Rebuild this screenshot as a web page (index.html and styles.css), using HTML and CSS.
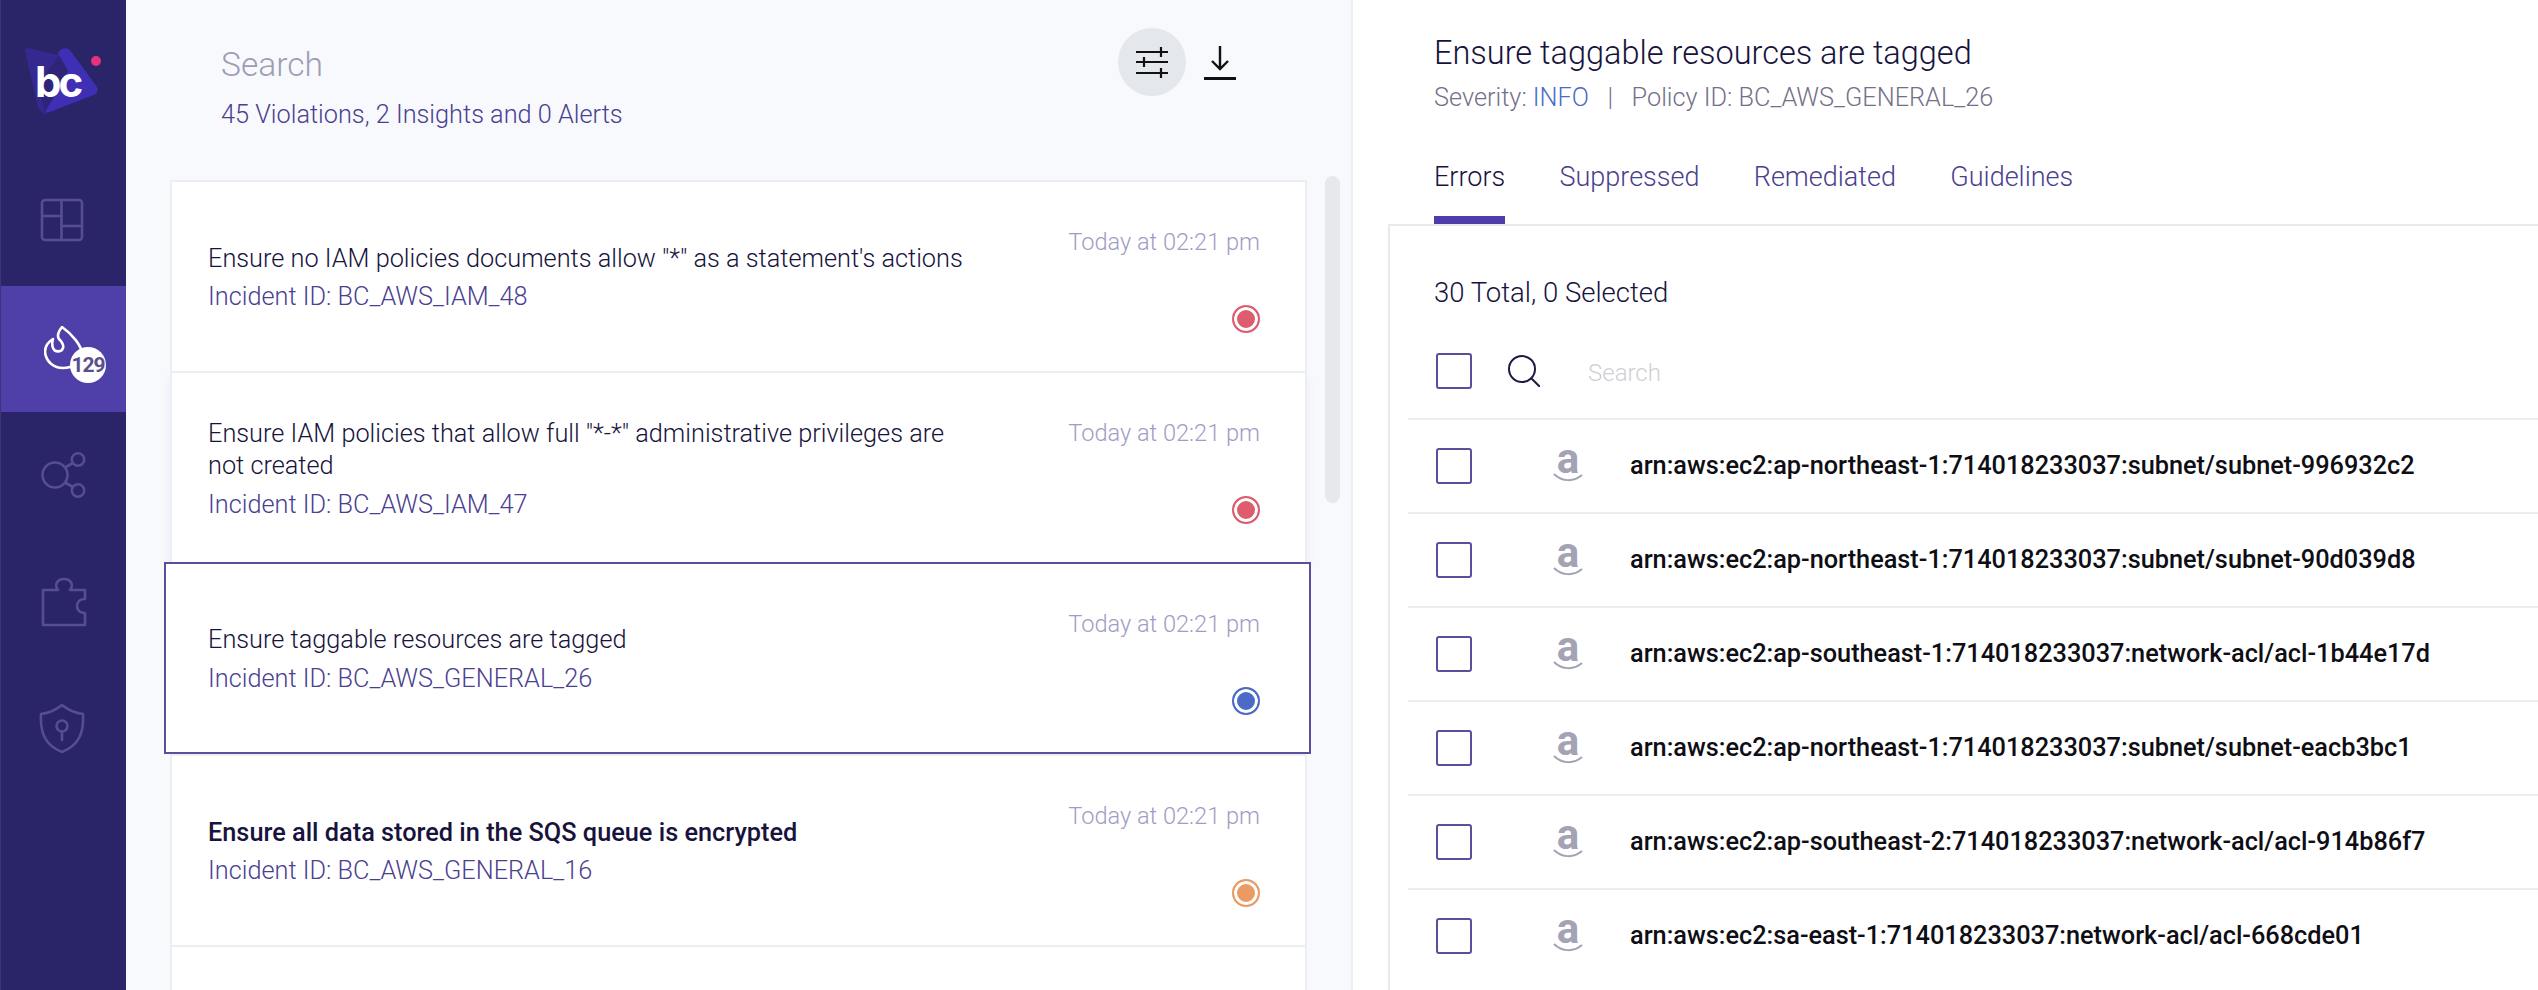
FILE: index.html
```html
<!DOCTYPE html>
<html lang="en">
<head>
<meta charset="utf-8">
<title>Incidents</title>
<link rel="stylesheet" href="styles.css">
</head>
<body>
<div class="app">
  <nav class="sidebar">
    <div class="logo">
      <svg class="logo-art" viewBox="0 0 80 70" width="80" height="70" stroke-linejoin="round">
        <path d="M4 4 L33 11 L21 64 L17 60 Z" fill="#35298f" stroke="#35298f" stroke-width="6"/>
        <path d="M37 6 C39 3 43 3 45 6 L70 40 C72 43 71 45 68 46 L24 63 L31 30 Z" fill="#3f2fb5" stroke="#3f2fb5" stroke-width="5"/>
        <path d="M35 8 L44 24 L30 50 L21 65 L14 38 Z" fill="#2e2578"/>
        <circle cx="72" cy="14" r="5" fill="#e6317f"/>
      </svg>
      <span class="logo-text">bc</span>
    </div>
    <div class="nav-item nav-grid">
      <svg viewBox="0 0 44 44" width="44" height="44" fill="none" stroke="#574e91" stroke-width="2.6"><rect x="2" y="2" width="40" height="40" rx="3"/><path d="M21.5 2v40M2 18h19.5M21.5 28H42"/></svg>
    </div>
    <div class="nav-item nav-active">
      <svg viewBox="0 0 40 50" width="40" height="50" fill="none" stroke="#fff" stroke-width="2.6" stroke-linejoin="round" stroke-linecap="round"><path d="M18 3 C14 8 13 12 15 15 C18 18 20 21 19 24 C18 28 11 29 9 24 C8 21 8 18 9 15 C4 18 1 23 1 28 C2 38 10 44 19 44 C29 44 37 38 38 30 C38 22 28 10 18 3 Z"/></svg>
      <span class="badge">129</span>
    </div>
    <div class="nav-item nav-net">
      <svg viewBox="0 0 46 46" width="46" height="46" fill="none" stroke="#574e91" stroke-width="2.6"><circle cx="14" cy="23" r="12.5"/><circle cx="37" cy="7.5" r="6.2"/><circle cx="37" cy="38.5" r="6.2"/><path d="M24 15.5 L32 11M24 30.5 L32 35"/></svg>
    </div>
    <div class="nav-item nav-puzzle">
      <svg viewBox="0 0 46 50" width="46" height="50" fill="none" stroke="#574e91" stroke-width="2.6" stroke-linejoin="round"><path d="M2 13 H17 C13 8 16 2 23 2 C30 2 33 8 29 13 H44 V22 C38 22 36 26 36 29 C36 32 38 36 44 36 V48 H2 Z"/></svg>
    </div>
    <div class="nav-item nav-shield">
      <svg viewBox="0 0 46 50" width="46" height="50" fill="none" stroke="#574e91" stroke-width="2.6" stroke-linejoin="round" stroke-linecap="round"><path d="M23 2 C17 7 10 10 2 11 C1 30 6 42 23 49 C40 42 45 30 44 11 C36 10 29 7 23 2 Z"/><circle cx="23" cy="23" r="5.5"/><path d="M23 29 V37"/></svg>
    </div>
  </nav>

  <section class="list-panel">
    <header class="list-head">
      <div class="head-text">
        <div class="list-search">Search</div>
        <div class="list-count">45 Violations, 2 Insights and 0 Alerts</div>
      </div>
      <div class="head-tools">
        <span class="tool-circle">
          <svg viewBox="0 0 32 32" width="32" height="32" stroke="#111" stroke-width="2.2" fill="none"><path d="M0 6h32M0 16h32M0 27h32M25 1v10M8 11v10M25 22v10"/></svg>
        </span>
        <svg class="tool-dl" viewBox="0 0 32 36" width="32" height="36" stroke="#111" fill="none"><path stroke-width="2.4" d="M16 0v23M8 15l8 8 8-8"/><path stroke-width="3" d="M0 32.5h32"/></svg>
      </div>
    </header>
    <div class="list-body">
      <div class="cards">
        <article class="card">
          <div class="card-main">
            <div class="card-title">Ensure no IAM policies documents allow "*" as a statement's actions</div>
            <div class="card-id">Incident ID: BC_AWS_IAM_48</div>
          </div>
          <div class="card-side"><div class="card-time">Today at 02:21 pm</div><span class="dot dot-red"></span></div>
        </article>
        <article class="card card-raised">
          <div class="card-main">
            <div class="card-title">Ensure IAM policies that allow full "*-*" administrative privileges are not created</div>
            <div class="card-id">Incident ID: BC_AWS_IAM_47</div>
          </div>
          <div class="card-side"><div class="card-time">Today at 02:21 pm</div><span class="dot dot-red"></span></div>
        </article>
        <article class="card card-selected">
          <div class="card-main">
            <div class="card-title">Ensure taggable resources are tagged</div>
            <div class="card-id">Incident ID: BC_AWS_GENERAL_26</div>
          </div>
          <div class="card-side"><div class="card-time">Today at 02:21 pm</div><span class="dot dot-blue"></span></div>
        </article>
        <article class="card">
          <div class="card-main">
            <div class="card-title card-title-unread">Ensure all data stored in the SQS queue is encrypted</div>
            <div class="card-id">Incident ID: BC_AWS_GENERAL_16</div>
          </div>
          <div class="card-side"><div class="card-time">Today at 02:21 pm</div><span class="dot dot-orange"></span></div>
        </article>
        <article class="card"></article>
      </div>
      <div class="thumb"></div>
    </div>
  </section>

  <section class="detail">
    <header class="detail-head">
      <h1 class="detail-title">Ensure taggable resources are tagged</h1>
      <div class="detail-sub">Severity: <span class="sev">INFO</span><span class="pipe">|</span>Policy ID: BC_AWS_GENERAL_26</div>
      <div class="tabs">
        <span class="tab tab-active">Errors</span>
        <span class="tab">Suppressed</span>
        <span class="tab">Remediated</span>
        <span class="tab">Guidelines</span>
      </div>
    </header>
    <div class="errors">
      <div class="errors-total">30 Total, 0 Selected</div>
      <div class="errors-tools">
        <span class="check"></span>
        <svg class="search-icon" viewBox="0 0 32 32" width="32" height="32" fill="none" stroke="#1f1a45" stroke-width="2"><circle cx="14" cy="14" r="13"/><path d="M23 23l9 9"/></svg>
        <span class="errors-search">Search</span>
      </div>
      <div class="row"><span class="check"></span><svg class="aws" viewBox="0 0 30 34" width="30" height="34"><text class="aws-a" x="15" y="24" text-anchor="middle">a</text><path d="M1 25 C9 33 21 33 29 26" fill="none" stroke="#a3a3b5" stroke-width="2"/></svg><span class="arn">arn:aws:ec2:ap-northeast-1:714018233037:subnet/subnet-996932c2</span></div>
      <div class="row"><span class="check"></span><svg class="aws" viewBox="0 0 30 34" width="30" height="34"><text class="aws-a" x="15" y="24" text-anchor="middle">a</text><path d="M1 25 C9 33 21 33 29 26" fill="none" stroke="#a3a3b5" stroke-width="2"/></svg><span class="arn">arn:aws:ec2:ap-northeast-1:714018233037:subnet/subnet-90d039d8</span></div>
      <div class="row"><span class="check"></span><svg class="aws" viewBox="0 0 30 34" width="30" height="34"><text class="aws-a" x="15" y="24" text-anchor="middle">a</text><path d="M1 25 C9 33 21 33 29 26" fill="none" stroke="#a3a3b5" stroke-width="2"/></svg><span class="arn">arn:aws:ec2:ap-southeast-1:714018233037:network-acl/acl-1b44e17d</span></div>
      <div class="row"><span class="check"></span><svg class="aws" viewBox="0 0 30 34" width="30" height="34"><text class="aws-a" x="15" y="24" text-anchor="middle">a</text><path d="M1 25 C9 33 21 33 29 26" fill="none" stroke="#a3a3b5" stroke-width="2"/></svg><span class="arn">arn:aws:ec2:ap-northeast-1:714018233037:subnet/subnet-eacb3bc1</span></div>
      <div class="row"><span class="check"></span><svg class="aws" viewBox="0 0 30 34" width="30" height="34"><text class="aws-a" x="15" y="24" text-anchor="middle">a</text><path d="M1 25 C9 33 21 33 29 26" fill="none" stroke="#a3a3b5" stroke-width="2"/></svg><span class="arn">arn:aws:ec2:ap-southeast-2:714018233037:network-acl/acl-914b86f7</span></div>
      <div class="row"><span class="check"></span><svg class="aws" viewBox="0 0 30 34" width="30" height="34"><text class="aws-a" x="15" y="24" text-anchor="middle">a</text><path d="M1 25 C9 33 21 33 29 26" fill="none" stroke="#a3a3b5" stroke-width="2"/></svg><span class="arn">arn:aws:ec2:sa-east-1:714018233037:network-acl/acl-668cde01</span></div>
    </div>
  </section>
</div>
</body>
</html>
```
FILE: styles.css
```css
* { box-sizing: border-box; }
html, body { margin: 0; height: 100%; overflow: hidden; }
body { font-family: Roboto, "Liberation Sans", sans-serif; font-weight: 300; background: #fff; color: #1f1a45; }

.app { display: flex; height: 990px; overflow: hidden; }

/* Sidebar */
.sidebar { flex: 0 0 126px; background: #2a2468; border-left: 1px solid #3a3478; display: flex; flex-direction: column; align-items: stretch; }
.logo { position: relative; height: 198px; padding: 47px 0 0 23px; }
.logo-art { display: block; }
.logo-text { position: absolute; left: 34px; top: 52px; font: 700 42px/60px Inter, Roboto, sans-serif; color: #fff; letter-spacing: -3px; }
.nav-item { display: flex; justify-content: center; }
.nav-grid { height: 88px; padding-right: 3px; }
.nav-active { position: relative; height: 126px; background: #4f3fa9; align-items: flex-start; justify-content: flex-start; padding: 38px 0 0 43px; }
.badge { position: absolute; left: 69px; top: 61px; width: 36px; height: 36px; border-radius: 50%; background: #fff; color: #5a4f8c; font: 700 21px/36px Roboto, sans-serif; text-align: center; letter-spacing: -1px; }
.nav-net { height: 165px; padding-top: 40px; }
.nav-puzzle { height: 126px; padding-left: 1px; }
.nav-shield { height: 60px; padding-right: 4px; }

/* List */
.list-panel { flex: 0 0 1227px; background: #f8f9fd; border-right: 2px solid #eceef3; display: flex; flex-direction: column; min-height: 0; }
.list-head { flex: 0 0 180px; display: flex; justify-content: space-between; align-items: flex-start; padding: 28px 115px 0 95px; }
.head-text { padding-top: 18px; }
.list-search { font-size: 33.6px; line-height: 38px; color: #9d9db4; }
.list-count { margin-top: 15px; font-size: 25.3px; line-height: 32px; color: #4a4090; }
.head-tools { display: flex; align-items: flex-start; gap: 18px; }
.tool-circle { width: 68px; height: 68px; border-radius: 50%; background: #e4e7eb; display: flex; align-items: center; justify-content: center; }
.tool-dl { margin-top: 18px; }
.list-body { flex: 1; display: flex; align-items: flex-start; min-height: 0; padding-left: 44px; }
.cards { flex: 0 0 1137px; display: flex; flex-direction: column; }
.card { position: relative; flex: 0 0 191px; height: 191px; background: #fff; border: 2px solid #eceef3; border-bottom-width: 0; display: flex; justify-content: space-between; padding: 0 45px 0 36px; }
.card-raised { box-shadow: 0 6px 10px rgba(40, 36, 100, .06); z-index: 1; }
.card-selected { margin: 0 -4px 0 -6px; flex-basis: 192px; height: 192px; border: 2px solid #5a4f9a; padding: 0 49px 0 42px; z-index: 2; }
.card-main { width: 770px; display: flex; flex-direction: column; justify-content: center; padding-top: 3px; }
.card-title { font-size: 25.3px; line-height: 32.5px; color: #17133c; }
.card-title-unread { font-weight: 500; }
.card-id { margin-top: 5px; font-size: 25.3px; line-height: 33px; color: #4a4090; }
.card-side { display: flex; flex-direction: column; align-items: flex-end; padding-top: 46px; }
.card-time { font-size: 23.6px; line-height: 28px; color: #a09dc4; white-space: nowrap; }
.dot { margin-top: 49px; width: 28px; height: 28px; border-radius: 50%; border: 2px solid; box-shadow: inset 0 0 0 3px #fff; }
.dot-red { border-color: #dd5c6e; background: #dd5c6e; }
.dot-blue { border-color: #4a6bc8; background: #4a6bc8; }
.dot-orange { border-color: #ea9a62; background: #ea9a62; }
.thumb { flex: 0 0 15px; height: 327px; margin: -4px 0 0 18px; border-radius: 8px; background: #e6e8ec; }

/* Detail */
.detail { flex: 1; min-width: 0; display: flex; flex-direction: column; }
.detail-head { flex: 0 0 224px; padding: 31px 0 0 81px; display: flex; flex-direction: column; }
.detail-title { margin: 0; font-size: 32.5px; line-height: 44px; font-weight: 300; color: #17133c; }
.detail-sub { margin-top: 6px; font-size: 25.3px; line-height: 34px; color: #73718a; }
.sev { color: #4a6bc8; }
.pipe { margin: 0 18.5px; }
.tabs { display: flex; gap: 54.3px; margin-top: 44px; flex: 1; }
.tab { font-size: 27px; line-height: 36px; color: #4a4090; }
.tab-active { color: #17133c; border-bottom: 8px solid #4e3ca8; }
.errors { margin-left: 35px; border-top: 2px solid #e9e9f0; border-left: 2px solid #e9e9f0; padding-left: 18px; flex: 1; min-height: 0; }
.errors-total { padding: 50px 0 0 26px; font-size: 27.5px; line-height: 34px; color: #17133c; }
.errors-tools { display: flex; align-items: center; height: 72px; margin: 25px 0 10.5px; padding-left: 28px; }
.check { flex: 0 0 36px; width: 36px; height: 36px; border: 2px solid #5a4f9a; border-radius: 3px; background: #fff; }
.search-icon { margin-left: 36px; }
.errors-search { margin-left: 48px; font-size: 24px; color: #cfcfd4; padding-top: 4px; }
.row { display: flex; align-items: center; height: 94px; border-top: 2px solid #ecedf2; padding-left: 28px; }
.aws { margin-left: 81px; overflow: visible; }
.aws-a { font: 700 42px Roboto, sans-serif; fill: #a3a3b5; }
.arn { margin-left: 47px; font-size: 25.3px; font-weight: 500; color: #0e0e14; white-space: nowrap; }
```
